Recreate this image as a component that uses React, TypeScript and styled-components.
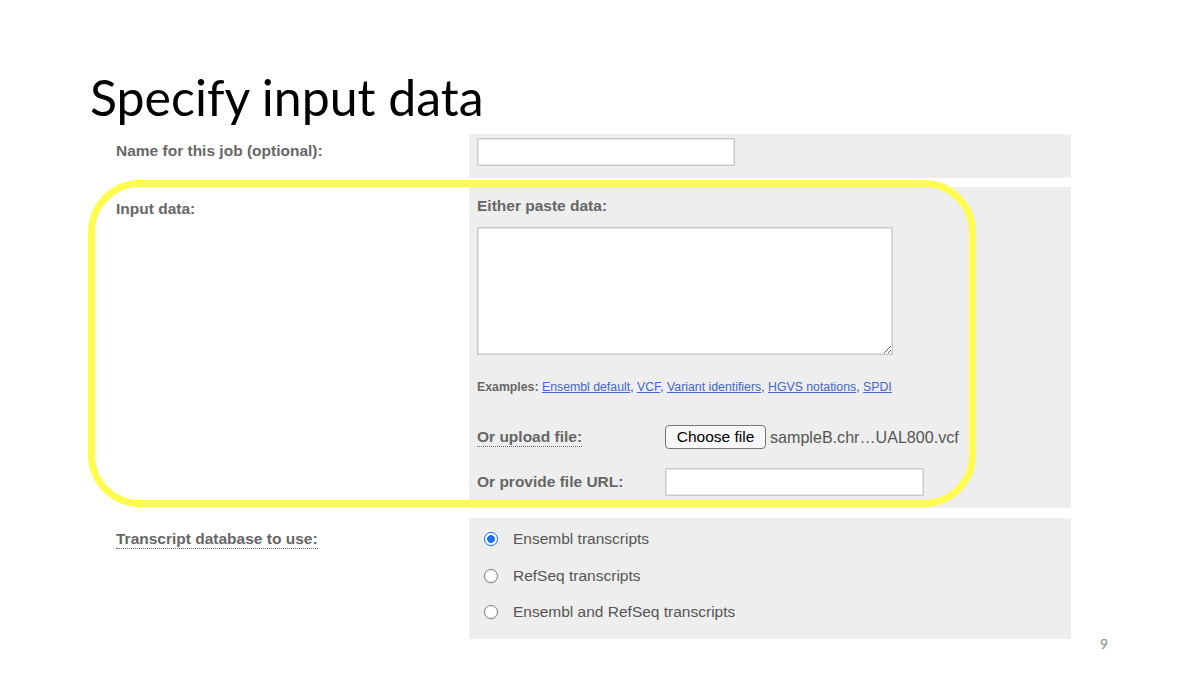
import styled, { createGlobalStyle } from "styled-components";

const GlobalStyle = createGlobalStyle`
  body {
    margin: 0;
    background: #ffffff;
  }
`;

const Slide = styled.div`
  width: 1200px;
  height: 675px;
  box-sizing: border-box;
  padding-top: 69px;
  background: #ffffff;
  overflow: hidden;
`;

const Title = styled.h1`
  margin: 0 0 9px 90px;
  font-family: "Lato", "Open Sans", sans-serif;
  font-weight: 400;
  font-size: 50px;
  line-height: 56px;
  color: #000000;
`;

const Body = styled.div`
  display: flex;
  align-items: flex-end;
`;

const Form = styled.div`
  margin-left: 108px;
  width: 963px;
  font-family: "Liberation Sans", Arial, sans-serif;
  font-size: 15.5px;
  line-height: 18px;
`;

const Row = styled.div<{ $gap?: number }>`
  position: relative;
  display: grid;
  grid-template-columns: 361px 602px;
  margin-top: ${(p) => p.$gap ?? 0}px;
`;

const Label = styled.div<{ $top: number }>`
  padding: ${(p) => p.$top}px 0 0 8px;
  font-weight: 700;
  color: #666666;
`;

const Dotted = styled.span`
  border-bottom: 1px dotted #666666;
  padding-bottom: 1px;
`;

const Panel = styled.div<{ $pad: string }>`
  background: #eeeeee;
  padding: ${(p) => p.$pad};
`;

const TextInput = styled.input<{ $w: number }>`
  display: block;
  width: ${(p) => p.$w}px;
  height: 28px;
  box-sizing: border-box;
  border: 1px solid #c9c9c9;
  box-shadow: inset 0 0 0 1px #e6e6e6;
  background: #ffffff;
  margin: 0;
`;

const SubHeading = styled.div`
  font-weight: 700;
  color: #666666;
`;

const PasteArea = styled.textarea`
  display: block;
  margin-top: 12px;
  width: 416px;
  height: 128px;
  box-sizing: border-box;
  border: 1px solid #c9c9c9;
  box-shadow: inset 0 0 0 1px #e2e2e2;
  background: #ffffff;
`;

const Examples = styled.div`
  margin-top: 25px;
  font-size: 12.3px;
  line-height: 14px;
  color: #555555;

  b {
    color: #666666;
  }

  a {
    color: #4466cc;
    text-decoration: underline;
  }
`;

const FieldRow = styled.div<{ $gap: number }>`
  display: grid;
  grid-template-columns: 188px auto;
  align-items: center;
  margin-top: ${(p) => p.$gap}px;
`;

const FileControl = styled.div`
  display: flex;
  align-items: center;
  gap: 4px;
`;

const ChooseButton = styled.button`
  height: 24px;
  width: 101px;
  padding: 0;
  border: 1px solid #767676;
  border-radius: 4px;
  background: #f8f8f8;
  font-family: "Liberation Sans", Arial, sans-serif;
  font-size: 15.5px;
  color: #000000;
`;

const FileName = styled.span`
  font-size: 16.1px;
  color: #555555;
  white-space: nowrap;
`;

const Highlight = styled.div`
  position: absolute;
  left: -20px;
  top: -7px;
  width: 888px;
  height: 327px;
  box-sizing: border-box;
  border: 7px solid #fffb4f;
  border-radius: 52px;
  pointer-events: none;
`;

const Option = styled.label`
  display: flex;
  align-items: center;
  gap: 15px;
  color: #555555;
  margin-bottom: 18.5px;

  &:last-child {
    margin-bottom: 0;
  }
`;

const Radio = styled.input`
  appearance: none;
  margin: 0;
  width: 14px;
  height: 14px;
  box-sizing: border-box;
  border: 1px solid #808080;
  border-radius: 50%;
  background: #ffffff;
  box-shadow: 0 0.5px 1px rgba(0, 0, 0, 0.15);

  &:checked {
    border: 1.5px solid #1f6fef;
    background: radial-gradient(circle, #1b6ff5 0 3.6px, #ffffff 4.2px);
  }
`;

const PageNumber = styled.div`
  margin: 0 0 -12px 29px;
  font-family: "Lato", "Open Sans", sans-serif;
  font-size: 14px;
  line-height: 14px;
  color: #8a8a8a;
`;

const links = ["Ensembl default", "VCF", "Variant identifiers", "HGVS notations", "SPDI"];
const transcripts = ["Ensembl transcripts", "RefSeq transcripts", "Ensembl and RefSeq transcripts"];

export default function App() {
  return (
    <>
      <GlobalStyle />
      <Slide>
        <Title>Specify input data</Title>
        <Body>
          <Form>
            <Row>
              <Label $top={8}>Name for this job (optional):</Label>
              <Panel $pad="4px 8px 12px">
                <TextInput $w={258} />
              </Panel>
            </Row>

            <Row $gap={9}>
              <Label $top={13}>Input data:</Label>
              <Panel $pad="10px 8px 12px">
                <SubHeading>Either paste data:</SubHeading>
                <PasteArea />
                <Examples>
                  <b>Examples: </b>
                  {links.map((l, i) => (
                    <span key={l}>
                      <a href="#">{l}</a>
                      {i < links.length - 1 ? ", " : ""}
                    </span>
                  ))}
                </Examples>
                <FieldRow $gap={31}>
                  <SubHeading>
                    <Dotted>Or upload file:</Dotted>
                  </SubHeading>
                  <FileControl>
                    <ChooseButton>Choose file</ChooseButton>
                    <FileName>sampleB.chr…UAL800.vcf</FileName>
                  </FileControl>
                </FieldRow>
                <FieldRow $gap={19}>
                  <SubHeading>Or provide file URL:</SubHeading>
                  <TextInput $w={259} />
                </FieldRow>
              </Panel>
              <Highlight />
            </Row>

            <Row $gap={10}>
              <Label $top={12}>
                <Dotted>Transcript database to use:</Dotted>
              </Label>
              <Panel $pad="12px 15px 18px">
                {transcripts.map((t, i) => (
                  <Option key={t}>
                    <Radio type="radio" name="transcripts" defaultChecked={i === 0} />
                    {t}
                  </Option>
                ))}
              </Panel>
            </Row>
          </Form>
          <PageNumber>9</PageNumber>
        </Body>
      </Slide>
    </>
  );
}
